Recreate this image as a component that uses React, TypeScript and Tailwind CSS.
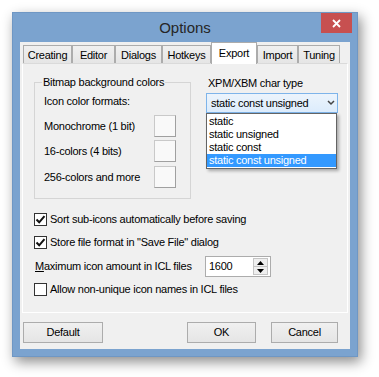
import React from "react";

const font = "font-['Liberation_Sans',Arial,sans-serif] text-[11px] leading-[13px] tracking-[-0.25px] text-black";

const tabs = [
  { label: "Creating", w: "w-[49px]" },
  { label: "Editor", w: "w-[43px]" },
  { label: "Dialogs", w: "w-[47px]" },
  { label: "Hotkeys", w: "w-[49px]" },
  { label: "Export", w: "w-[46px]", active: true },
  { label: "Import", w: "w-[41px]" },
  { label: "Tuning", w: "w-[42px]" },
];

function Check({ checked }: { checked?: boolean }) {
  return (
    <span className="flex h-[13px] w-[13px] items-center justify-center border border-[#333333] bg-white">
      {checked && (
        <svg width="11" height="11" viewBox="0 0 11 11">
          <path d="M1.5 5.5 L4.2 8.3 L9.5 2.2" fill="none" stroke="#111" strokeWidth="2" />
        </svg>
      )}
    </span>
  );
}

function ColorBox() {
  return <span className="block h-[22px] w-[22px] border border-[#c9c9c9] border-r-[#a0a0a0] border-b-[#a0a0a0] bg-[#f9f9f9]" />;
}

function Btn({ label, w }: { label: string; w: string }) {
  return (
    <button className={`${w} h-[21px] border border-[#acacac] bg-gradient-to-b from-[#f0f0f0] to-[#e5e5e5] ${font}`}>
      {label}
    </button>
  );
}

export default function App() {
  const items = ["static", "static unsigned", "static const", "static const unsigned"];
  return (
    <div className="h-[377px] w-[379px] overflow-hidden bg-white pl-[12px] pt-[12px]">
      <div className="flex h-[345px] w-[346px] flex-col border border-[#6f97c4] bg-[#7ba3cf] shadow-[3px_5px_12px_rgba(0,0,0,0.45)]">
        {/* title bar */}
        <div className="grid h-[29px] grid-cols-[1fr_auto_1fr]">
          <div />
          <div className="pt-[6px] font-['Liberation_Sans',Arial,sans-serif] text-[15px] leading-[18px] text-[#262626]">Options</div>
          <div className="flex justify-end pr-[5px]">
            <div className="flex h-[20px] w-[31px] items-center justify-center bg-[#c75050]">
              <svg width="9" height="9" viewBox="0 0 9 9">
                <path d="M1 1 L8 8 M8 1 L1 8" stroke="white" strokeWidth="1.8" />
              </svg>
            </div>
          </div>
        </div>

        {/* client */}
        <div className="mx-[7px] mb-[7px] flex flex-1 flex-col bg-[#f0f0f0]">
          <div className="flex h-[21px] items-end pl-[3px] pt-[1px]">
            {tabs.map((t) =>
              t.active ? (
                <div key={t.label} className={`${t.w} relative z-10 -mb-px flex h-[22px] justify-center border border-b-0 border-[#acacac] bg-white pt-[4px] ${font}`}>
                  {t.label}
                </div>
              ) : (
                <div key={t.label} className={`${t.w} flex h-[18px] justify-center border border-b-0 border-[#acacac] bg-gradient-to-b from-[#f0f0f0] to-[#e5e5e5] pt-[3px] ${font}`}>
                  {t.label}
                </div>
              )
            )}
          </div>

          <div className={`mx-[2px] h-[250px] border border-white border-t-[#dadada] bg-[#f0f0f0] pl-[11px] pt-[12px] ${font}`}>
            <div className="flex">
              <fieldset className="h-[123px] w-[157px] border border-[#d5d5d5] pl-[9px]">
                <legend className="ml-[-2px] px-[1px]">Bitmap background colors</legend>
                <div className="mt-[6px]">Icon color formats:</div>
                <div className="mt-[7px] grid grid-cols-[110px_22px] items-center">
                  <span>Monochrome (1 bit)</span>
                  <ColorBox />
                </div>
                <div className="mt-[3px] grid grid-cols-[110px_22px] items-center">
                  <span>16-colors (4 bits)</span>
                  <ColorBox />
                </div>
                <div className="mt-[4px] grid grid-cols-[110px_22px] items-center">
                  <span>256-colors and more</span>
                  <ColorBox />
                </div>
              </fieldset>

              <div className="ml-[15px] w-[132px] pt-[1px]">
                <div className="pl-[2px]">XPM/XBM char type</div>
                <div className="relative mt-[3px]">
                  <div className="flex h-[20px] items-center justify-between border border-[#7eb4ea] bg-gradient-to-b from-[#ecf4fc] to-[#dcecfc] pl-[4px] pr-[2px]">
                    <span>static const unsigned</span>
                    <svg width="8" height="6" viewBox="0 0 8 6">
                      <path d="M1 1 L4 4 L7 1" fill="none" stroke="#444" strokeWidth="1.5" />
                    </svg>
                  </div>
                  <div className="absolute left-0 top-[20px] z-20 w-[131px] border border-[#646464] bg-white py-[1px] shadow-[2px_2px_3px_rgba(0,0,0,0.3)]">
                    {items.map((it, i) => (
                      <div key={it} className={`h-[13px] pl-[2px] ${i === 3 ? "bg-[#3399ff] text-white" : ""}`}>
                        {it}
                      </div>
                    ))}
                  </div>
                </div>
              </div>
            </div>

            <label className="mt-[14px] flex items-center gap-[3px]">
              <Check checked />
              <span>Sort sub-icons automatically before saving</span>
            </label>
            <label className="mt-[10px] flex items-center gap-[3px]">
              <Check checked />
              <span>Store file format in "Save File" dialog</span>
            </label>
            <div className="mt-[7px] flex items-center pl-[1px]">
              <span className="w-[170px]">
                <span className="underline">M</span>aximum icon amount in ICL files
              </span>
              <div className="flex h-[21px] w-[66px] items-center justify-between border border-[#acacac] bg-white pl-[3px] pr-[2px]">
                <span>1600</span>
                <div className="flex h-[17px] w-[15px] flex-col border border-[#c5c5c5] bg-[#efefef]">
                  <div className="flex flex-1 items-center justify-center border-b border-[#c5c5c5]">
                    <svg width="7" height="4" viewBox="0 0 7 4"><path d="M0 4 L3.5 0 L7 4 Z" fill="#000" /></svg>
                  </div>
                  <div className="flex flex-1 items-center justify-center">
                    <svg width="7" height="4" viewBox="0 0 7 4"><path d="M0 0 L3.5 4 L7 0 Z" fill="#000" /></svg>
                  </div>
                </div>
              </div>
            </div>
            <label className="mt-[6px] flex items-center gap-[3px]">
              <Check />
              <span>Allow non-unique icon names in ICL files</span>
            </label>
          </div>

          <div className="mt-[9px] flex pl-[3px] pr-[12px]">
            <Btn label="Default" w="w-[80px]" />
            <div className="flex-1" />
            <Btn label="OK" w="w-[69px]" />
            <div className="w-[15px]" />
            <Btn label="Cancel" w="w-[67px]" />
          </div>
        </div>
      </div>
    </div>
  );
}
